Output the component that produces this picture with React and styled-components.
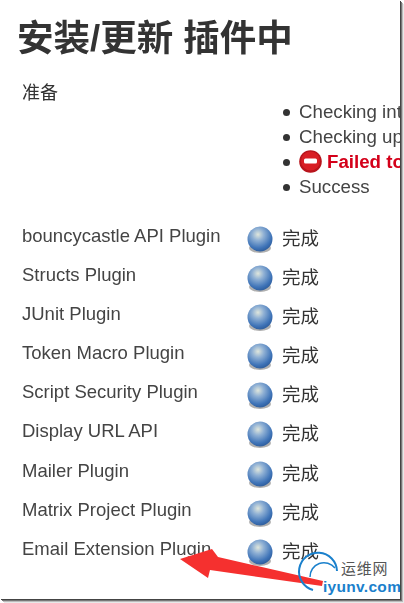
import React from 'react';
import styled, { createGlobalStyle } from 'styled-components';

const Global = createGlobalStyle`
  html, body {
    margin: 0;
    padding: 0;
    background: #fff;
  }
  body {
    width: 404px;
    height: 603px;
    overflow: hidden;
    font-family: "Liberation Sans", "Noto Sans CJK SC", sans-serif;
    color: #333;
  }
`;

const Shot = styled.div`
  position: relative;
  box-sizing: border-box;
  width: 400px;
  height: 599px;
  padding: 15px 0 0 17px;
  box-shadow: 1px 1px 0 #444, 2px 2px 0 #777, 3px 3px 0 #bbb, 4px 4px 0 #e8e8e8;
`;

/* keeps the long log lines cut at the frame, the shadow stays outside */
const Clip = styled.div`
  width: 383px;
  height: 584px;
  overflow: hidden;
  filter: blur(0.35px);
`;

const Title = styled.h1`
  margin: 0;
  font-size: 36.5px;
  line-height: 48px;
  font-weight: 700;
  color: #333;
  white-space: nowrap;
`;

const Prepare = styled.div`
  margin: 18px 0 0 5px;
  font-size: 18px;
  line-height: 24px;
`;

const Log = styled.ul`
  margin: -6px 0 0 282px;
  padding: 0;
  list-style: none;
  white-space: nowrap;
  font-size: 18.7px;
  line-height: 25px;
  color: #444;
`;

const LogItem = styled.li`
  position: relative;
  display: flex;
  align-items: center;
  gap: 5px;
  height: 25px;
  color: ${p => (p.$failed ? '#d4001a' : '#444')};
  font-weight: ${p => (p.$failed ? 700 : 400)};
  &::before {
    content: '';
    position: absolute;
    left: -16px;
    top: 10px;
    width: 7px;
    height: 7px;
    border-radius: 50%;
    background: #333;
  }
`;

const StopBadge = styled.svg`
  flex: none;
`;

const Plugins = styled.div`
  margin: 25px 0 0 5px;
  display: grid;
  grid-template-columns: 225px 1fr;
  grid-auto-rows: 39.1px;
  font-size: 18.5px;
  line-height: 24px;
  color: #444;
`;

const PluginName = styled.div`
  white-space: nowrap;
`;

const Status = styled.div`
  display: flex;
  align-items: flex-start;
  gap: 9px;
  padding-top: 2px;
  font-size: 18.5px;
  line-height: 26px;
  color: #333;
`;

const Ball = styled.span`
  display: block;
  width: 26px;
  height: 28px;
  flex: none;
`;

const Overlay = styled.svg`
  position: absolute;
  left: 0;
  top: 0;
  pointer-events: none;
  filter: blur(0.3px);
`;

const WatermarkCn = styled.div`
  position: absolute;
  left: 341px;
  top: 559px;
  font-size: 15px;
  line-height: 20px;
  letter-spacing: 0.8px;
  color: #555;
`;

const WatermarkEn = styled.div`
  position: absolute;
  left: 323px;
  top: 578px;
  font-size: 15.5px;
  line-height: 18px;
  font-weight: 700;
  letter-spacing: 0.3px;
  color: #1a80cc;
`;

const plugins = [
  'bouncycastle API Plugin',
  'Structs Plugin',
  'JUnit Plugin',
  'Token Macro Plugin',
  'Script Security Plugin',
  'Display URL API',
  'Mailer Plugin',
  'Matrix Project Plugin',
  'Email Extension Plugin',
];

const BlueBall = ({ id }) => (
  <Ball>
    <svg width="26" height="28" viewBox="0 0 26 28">
      <defs>
        <radialGradient id={id} cx="0.42" cy="0.32" r="0.68">
          <stop offset="0" stopColor="#dfe6dc" />
          <stop offset="0.35" stopColor="#8fb0d4" />
          <stop offset="0.8" stopColor="#3f74b8" />
          <stop offset="1" stopColor="#2f5f9f" />
        </radialGradient>
      </defs>
      <ellipse cx="13" cy="22" rx="11" ry="5" fill="#7a7a7a" opacity="0.6" />
      <circle cx="13" cy="13" r="12.5" fill={`url(#${id})`} />
    </svg>
  </Ball>
);

const StopIcon = () => (
  <StopBadge width="23" height="23" viewBox="0 0 23 23">
    <circle cx="11.5" cy="11.5" r="11.3" fill="#b8141c" />
    <circle cx="11.5" cy="11" r="9.5" fill="#d81e24" />
    <rect x="5" y="8.5" width="13" height="5" rx="1.5" fill="#fff" />
  </StopBadge>
);

export default function App() {
  return (
    <>
      <Global />
      <Shot>
        <Clip>
          <Title>安装/更新 插件中</Title>
          <Prepare>准备</Prepare>
          <Log>
            <LogItem>Checking internet connectivity</LogItem>
            <LogItem>Checking update center connectivity</LogItem>
            <LogItem $failed>
              <StopIcon />
              Failed to connect
            </LogItem>
            <LogItem>Success</LogItem>
          </Log>
          <Plugins>
            {plugins.map((name, i) => (
              <React.Fragment key={name}>
                <PluginName>{name}</PluginName>
                <Status>
                  <BlueBall id={`ball${i}`} />
                  完成
                </Status>
              </React.Fragment>
            ))}
          </Plugins>
        </Clip>
        <Overlay width="400" height="599" viewBox="0 0 400 599">
          <polygon
            points="180,559 212,549 218,557 323,581 322,586 210,570 208,578"
            fill="#f5302f"
          />
          <path d="M313 590 A19 19 0 1 1 337 571" fill="none" stroke="#1a80cc" strokeWidth="2" />
          <path d="M310 577 A14 14 0 0 1 335 568" fill="none" stroke="#1a80cc" strokeWidth="1.5" />
        </Overlay>
        <WatermarkCn>运维网</WatermarkCn>
        <WatermarkEn>iyunv.com</WatermarkEn>
      </Shot>
    </>
  );
}
